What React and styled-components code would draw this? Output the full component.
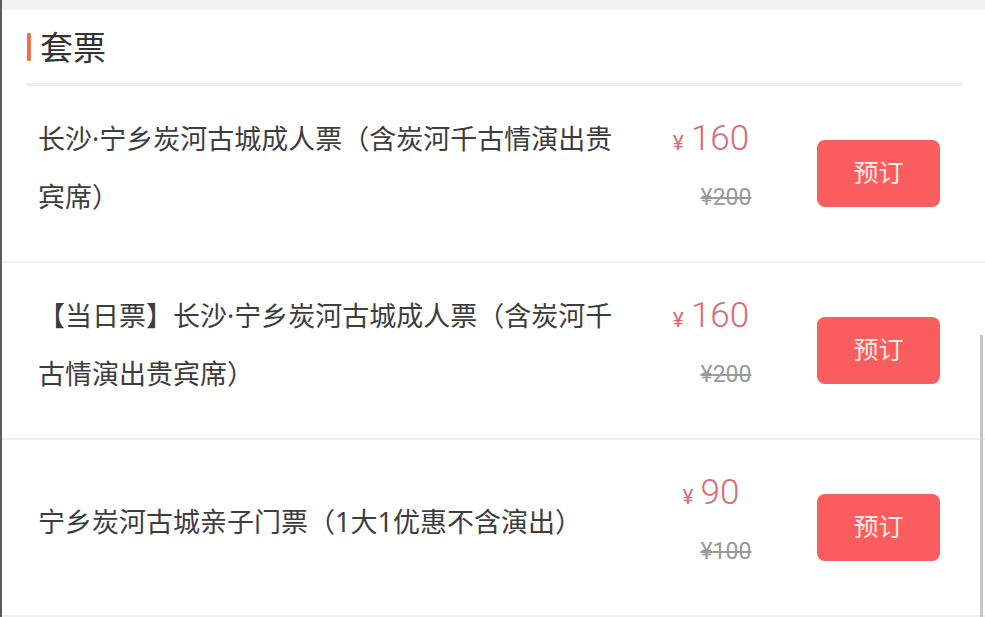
import styled, { createGlobalStyle } from 'styled-components';

const tickets = [
  {
    id: 1,
    name: '长沙·宁乡炭河古城成人票（含炭河千古情演出贵宾席）',
    price: 160,
    original: 200,
  },
  {
    id: 2,
    name: '【当日票】长沙·宁乡炭河古城成人票（含炭河千古情演出贵宾席）',
    price: 160,
    original: 200,
  },
  {
    id: 3,
    name: '宁乡炭河古城亲子门票（1大1优惠不含演出）',
    price: 90,
    original: 100,
  },
];

export default function App() {
  return (
    <>
      <GlobalStyle />
      <Page>
        <TopStrip />
        <Header>
          <Mark />
          <Title>套票</Title>
        </Header>
        <HeaderDivider />
        {tickets.map((t) => (
          <Row key={t.id}>
            <Name>{t.name}</Name>
            <PriceBox>
              <Price>
                <Yen>¥</Yen>
                {t.price}
              </Price>
              <Original>¥{t.original}</Original>
            </PriceBox>
            <BookButton>预订</BookButton>
          </Row>
        ))}
        <ScrollThumb />
      </Page>
    </>
  );
}

const GlobalStyle = createGlobalStyle`
  html, body {
    margin: 0;
    padding: 0;
    background: #fff;
  }
  body {
    font-family: "Noto Sans CJK SC", "Noto Sans", sans-serif;
  }
`;

const Page = styled.div`
  position: relative;
  height: 617px;
  overflow: hidden;
  border-left: 2px solid #5c5c5c;
  background: #fff;
`;

const TopStrip = styled.div`
  height: 10px;
  background: #f2f2f2;
`;

const Header = styled.div`
  display: flex;
  align-items: center;
  height: 73px;
  padding-left: 25px;
`;

const Mark = styled.span`
  width: 4px;
  height: 28px;
  background: #e8744a;
  border-radius: 1px;
`;

const Title = styled.h2`
  margin: 0 0 0 9px;
  font-size: 33px;
  font-weight: 400;
  color: #333;
  line-height: 1;
`;

const HeaderDivider = styled.div`
  height: 3px;
  margin: 0 23px 0 25px;
  background: #ececec;
`;

const Row = styled.div`
  display: flex;
  align-items: center;
  height: 175px;
  padding-left: 36px;
  border-bottom: 2px solid #efefef;
`;

const Name = styled.div`
  width: 590px;
  margin-bottom: 12px;
  font-family: "Noto Sans", "Noto Sans CJK SC", sans-serif;
  font-size: 27px;
  line-height: 58px;
  color: #3d3d3d;
`;

const PriceBox = styled.div`
  display: flex;
  flex-direction: column;
  align-items: center;
  width: 122px;
  margin-left: 22px;
  margin-bottom: 18px;
  font-family: Roboto, "Noto Sans CJK SC", sans-serif;
`;

const Price = styled.div`
  display: flex;
  align-items: baseline;
  gap: 7px;
  height: 40px;
  line-height: 40px;
  font-size: 35px;
  font-weight: 300;
  color: #de6870;
`;

const Yen = styled.span`
  font-size: 21px;
  font-weight: 400;
`;

const Original = styled.div`
  margin-top: 26px;
  padding-left: 30px;
  height: 26px;
  line-height: 26px;
  font-size: 23px;
  color: #9a9a9a;
  text-decoration: line-through;
`;

const BookButton = styled.button`
  width: 123px;
  height: 67px;
  margin-left: 45px;
  padding-bottom: 6px;
  border: none;
  border-radius: 8px;
  background: #fa5d5d;
  color: #ffe9e9;
  font-family: "Noto Sans CJK SC", sans-serif;
  font-size: 25px;
  cursor: pointer;
`;

const ScrollThumb = styled.div`
  position: absolute;
  top: 335px;
  right: 2px;
  bottom: 0;
  width: 3px;
  background: #c6c6c6;
`;
